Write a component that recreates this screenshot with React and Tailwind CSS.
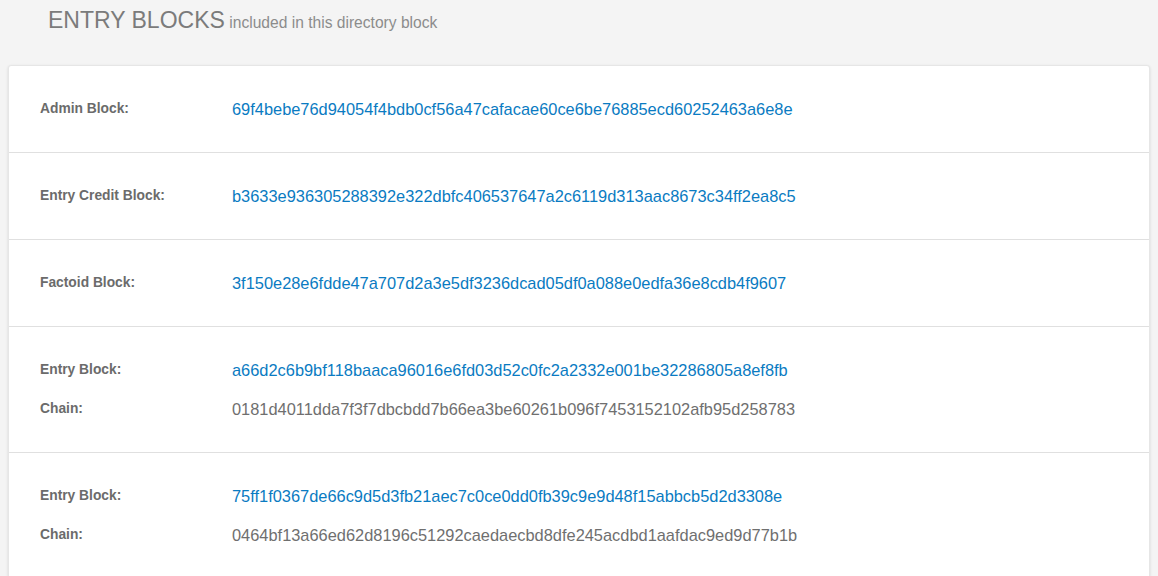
export default function App() {
  const rows = [
    [["Admin Block:", "69f4bebe76d94054f4bdb0cf56a47cafacae60ce6be76885ecd60252463a6e8e", true]],
    [["Entry Credit Block:", "b3633e936305288392e322dbfc406537647a2c6119d313aac8673c34ff2ea8c5", true]],
    [["Factoid Block:", "3f150e28e6fdde47a707d2a3e5df3236dcad05df0a088e0edfa36e8cdb4f9607", true]],
    [
      ["Entry Block:", "a66d2c6b9bf118baaca96016e6fd03d52c0fc2a2332e001be32286805a8ef8fb", true],
      ["Chain:", "0181d4011dda7f3f7dbcbdd7b66ea3be60261b096f7453152102afb95d258783", false],
    ],
    [
      ["Entry Block:", "75ff1f0367de66c9d5d3fb21aec7c0ce0dd0fb39c9e9d48f15abbcb5d2d3308e", true],
      ["Chain:", "0464bf13a66ed62d8196c51292caedaecbd8dfe245acdbd1aafdac9ed9d77b1b", false],
    ],
  ];
  return (
    <div className="min-h-[576px] bg-[#f4f4f4] pb-8" style={{ fontFamily: '"Liberation Sans", Arial, sans-serif' }}>
      <div className="pl-[48px] pt-[7px] leading-[26px] whitespace-nowrap">
        <span className="text-[23px] text-[#7b7b7b]">ENTRY BLOCKS</span>{" "}
        <span className="text-[15.6px] text-[#8c8c8c]">included in this directory block</span>
      </div>
      <div className="mx-[8px] mt-[29px] bg-white rounded-[3px] border border-[#e6e6e6] shadow-[0_1px_3px_rgba(0,0,0,0.12)]">
        {rows.map((row, i) => (
          <div key={i} className={"flex flex-col gap-[19px] py-[33px] " + (i > 0 ? "border-t border-[#e0e0e0]" : "")}>
            {row.map(([label, value, link], j) => (
              <div key={j} className="flex items-center leading-[20px] whitespace-nowrap">
                <div className="w-[223px] pl-[31px] text-[13.8px] font-bold text-[#6b6b6b]">{label}</div>
                <div className={"text-[16.4px] " + (link ? "text-[#0a7bc2]" : "text-[#6f6f6f]")}>{value}</div>
              </div>
            ))}
          </div>
        ))}
      </div>
    </div>
  );
}
